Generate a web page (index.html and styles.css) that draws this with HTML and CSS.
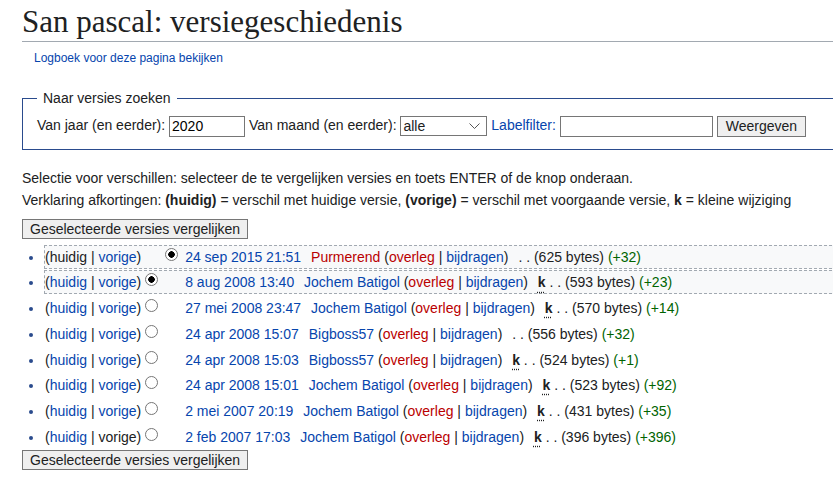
FILE: index.html
```html
<!DOCTYPE html>
<html lang="nl">
<head>
    <meta charset="UTF-8">
    <title>San pascal: versiegeschiedenis</title>
    <link rel="stylesheet" href="styles.css">
</head>
<body>
    <div class="content">
        <h1 class="page-title">San pascal: versiegeschiedenis</h1>
        <div class="subtitle"><a href="#">Logboek voor deze pagina bekijken</a></div>

        <form class="search-form">
            <fieldset>
                <legend>Naar versies zoeken</legend>
                <label>Van jaar (en eerder):</label>
                <input type="text" class="year-input" value="2020">
                <label>Van maand (en eerder):</label>
                <select class="month-select"><option>alle</option></select>
                <a href="#">Labelfilter:</a>
                <input type="text" class="tag-input">
                <button type="button" class="btn">Weergeven</button>
            </fieldset>
        </form>

        <p class="note first">Selectie voor verschillen: selecteer de te vergelijken versies en toets ENTER of de knop onderaan.</p>
        <p class="note">Verklaring afkortingen: <b>(huidig)</b> = verschil met huidige versie, <b>(vorige)</b> = verschil met voorgaande versie, <b>k</b> = kleine wijziging</p>

        <button type="button" class="btn compare-btn">Geselecteerde versies vergelijken</button>

        <ul class="history">
            <li class="selected">(huidig | <a href="#">vorige</a>)<input type="radio" class="hidden"><input type="radio" checked> <a href="#">24 sep 2015 21:51</a> <span class="user"><a href="#" class="new">Purmerend</a> (<a href="#" class="new">overleg</a> | <a href="#">bijdragen</a>)</span> <span class="sep">. .</span> (625 bytes) <span class="plus">(+32)</span></li>
            <li class="selected">(<a href="#">huidig</a> | <a href="#">vorige</a>)<input type="radio" checked><input type="radio" class="hidden"> <a href="#">8 aug 2008 13:40</a> <span class="user"><a href="#">Jochem Batigol</a> (<a href="#" class="new">overleg</a> | <a href="#">bijdragen</a>)</span> <abbr>k</abbr> . . (593 bytes) <span class="plus">(+23)</span></li>
            <li>(<a href="#">huidig</a> | <a href="#">vorige</a>)<input type="radio"><input type="radio" class="hidden"> <a href="#">27 mei 2008 23:47</a> <span class="user"><a href="#">Jochem Batigol</a> (<a href="#" class="new">overleg</a> | <a href="#">bijdragen</a>)</span> <abbr>k</abbr> . . (570 bytes) <span class="plus">(+14)</span></li>
            <li>(<a href="#">huidig</a> | <a href="#">vorige</a>)<input type="radio"><input type="radio" class="hidden"> <a href="#">24 apr 2008 15:07</a> <span class="user"><a href="#">Bigboss57</a> (<a href="#" class="new">overleg</a> | <a href="#">bijdragen</a>)</span> <span class="sep">. .</span> (556 bytes) <span class="plus">(+32)</span></li>
            <li>(<a href="#">huidig</a> | <a href="#">vorige</a>)<input type="radio"><input type="radio" class="hidden"> <a href="#">24 apr 2008 15:03</a> <span class="user"><a href="#">Bigboss57</a> (<a href="#" class="new">overleg</a> | <a href="#">bijdragen</a>)</span> <abbr>k</abbr> . . (524 bytes) <span class="plus">(+1)</span></li>
            <li>(<a href="#">huidig</a> | <a href="#">vorige</a>)<input type="radio"><input type="radio" class="hidden"> <a href="#">24 apr 2008 15:01</a> <span class="user"><a href="#">Jochem Batigol</a> (<a href="#" class="new">overleg</a> | <a href="#">bijdragen</a>)</span> <abbr>k</abbr> . . (523 bytes) <span class="plus">(+92)</span></li>
            <li>(<a href="#">huidig</a> | <a href="#">vorige</a>)<input type="radio"><input type="radio" class="hidden"> <a href="#">2 mei 2007 20:19</a> <span class="user"><a href="#">Jochem Batigol</a> (<a href="#" class="new">overleg</a> | <a href="#">bijdragen</a>)</span> <abbr>k</abbr> . . (431 bytes) <span class="plus">(+35)</span></li>
            <li>(<a href="#">huidig</a> | vorige)<input type="radio"><input type="radio" class="hidden"> <a href="#">2 feb 2007 17:03</a> <span class="user"><a href="#">Jochem Batigol</a> (<a href="#" class="new">overleg</a> | <a href="#">bijdragen</a>)</span> <abbr>k</abbr> . . (396 bytes) <span class="plus">(+396)</span></li>
        </ul>

        <button type="button" class="btn compare-btn bottom">Geselecteerde versies vergelijken</button>
    </div>
</body>
</html>
```

FILE: styles.css
```css
html {
    overflow: hidden;
}
body {
    font-family: "Liberation Sans", Arial, sans-serif;
    font-size: 14px;
    color: #202122;
    margin: 0;
    background: white;
}
a {
    color: #0645ad;
    text-decoration: none;
}
a.new {
    color: #ba0000;
}
.content {
    width: 900px;
    padding-left: 22px;
}
.page-title {
    font-family: "Liberation Serif", "Times New Roman", serif;
    font-weight: normal;
    font-size: 31px;
    line-height: 39px;
    margin: 0;
    padding-top: 2px;
    border-bottom: 1px solid #a2a9b1;
}
.subtitle {
    font-size: 12px;
    margin: 9px 0 0 12px;
}
.search-form {
    margin-top: 22px;
}
.search-form fieldset {
    border: 1px solid #2a4b8d;
    margin: 0;
    padding: 5px 14px 12px;
    line-height: 22px;
}
.search-form legend {
    padding: 0 6px;
    margin-left: 0;
}
.search-form input[type="text"] {
    font-family: "Liberation Sans", Arial, sans-serif;
    font-size: 14px;
    height: 21px;
    box-sizing: border-box;
    border: 1px solid #767676;
    padding: 1px 2px;
    vertical-align: middle;
}
.year-input {
    width: 76px;
}
.tag-input {
    width: 153px;
}
.month-select {
    appearance: none;
    font-family: "Liberation Sans", Arial, sans-serif;
    font-size: 14px;
    color: #202122;
    width: 87px;
    height: 20px;
    border: 1px solid #767676;
    border-radius: 0;
    background: white url("data:image/svg+xml;utf8,<svg xmlns='http://www.w3.org/2000/svg' width='11' height='7'><path d='M0.5 0.5 L5.5 5.5 L10.5 0.5' fill='none' stroke='%23555' stroke-width='1'/></svg>") no-repeat right 6px center;
    vertical-align: middle;
    padding: 0 2px;
}
.btn {
    font-family: "Liberation Sans", Arial, sans-serif;
    font-size: 14px;
    color: #202122;
    background: #efefef;
    border: 1px solid #767676;
    border-radius: 0;
    padding: 0 8px;
    height: 21px;
    vertical-align: middle;
}
.note {
    margin: 0;
    line-height: 22px;
}
.note.first {
    margin-top: 17px;
}
.compare-btn {
    height: 20px;
    margin-top: 8px;
    padding: 0 7px;
}
.compare-btn.bottom {
    margin-top: 0;
}
.history {
    margin: 6px 0 0 0;
    padding-left: 22px;
    list-style: disc;
}
.history li {
    line-height: 22px;
    border: 1px dashed transparent;
    margin-bottom: 1.7px;
}
.history li::marker {
    color: #2a4b8d;
}
.history li.selected {
    border-color: #a2a9b1;
    background: #f8f9fa;
}
.history input[type="radio"] {
    appearance: none;
    width: 13px;
    height: 13px;
    margin: 0 3px 0 4px;
    border: 1px solid #767676;
    border-radius: 50%;
    background: white;
    vertical-align: 1px;
    box-sizing: border-box;
}
.history input[type="radio"]:checked {
    background: radial-gradient(circle, #000 0 3px, white 3.5px);
}
.history input.hidden {
    visibility: hidden;
}
.user {
    margin-left: 6px;
}
.sep {
    margin-left: 6px;
}
abbr {
    font-weight: bold;
    text-decoration: underline dotted;
    text-underline-offset: 4px;
    margin-left: 6px;
}
.plus {
    color: #006400;
}
```
